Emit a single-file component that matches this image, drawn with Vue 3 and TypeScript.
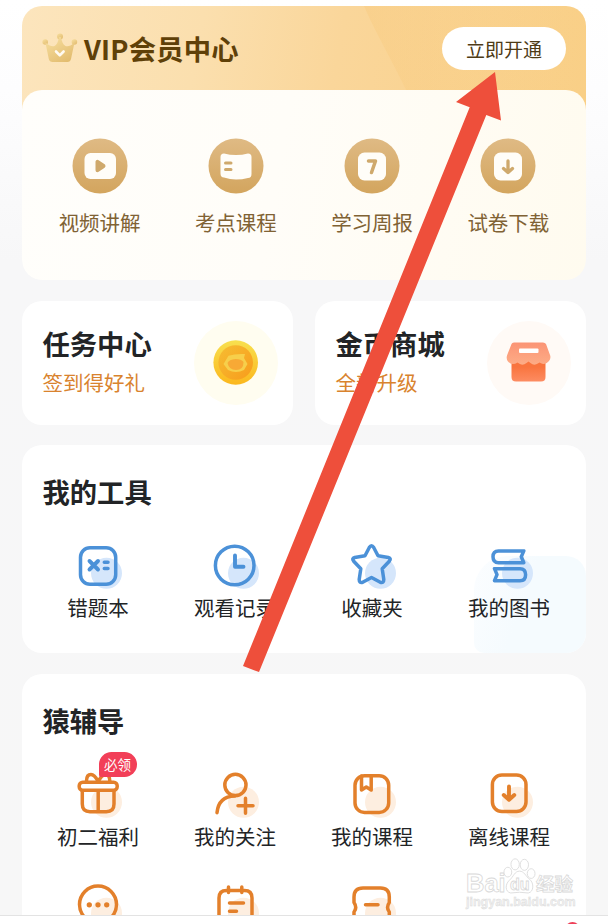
<script setup lang="ts">
interface Entry {
  id: string
  label: string
  badge?: string
}

const vipItems: Entry[] = [
  { id: 'video', label: '视频讲解' },
  { id: 'lesson', label: '考点课程' },
  { id: 'weekly', label: '学习周报' },
  { id: 'paper', label: '试卷下载' },
]

const tools: Entry[] = [
  { id: 'mistakes', label: '错题本' },
  { id: 'history', label: '观看记录' },
  { id: 'favorites', label: '收藏夹' },
  { id: 'books', label: '我的图书' },
]

const tutoring: Entry[] = [
  { id: 'gift', label: '初二福利', badge: '必领' },
  { id: 'follow', label: '我的关注' },
  { id: 'course', label: '我的课程' },
  { id: 'offline', label: '离线课程' },
  { id: 'chat', label: '' },
  { id: 'notes', label: '' },
  { id: 'coupon', label: '' },
]
</script>

<template>
  <div class="page">
    <main class="content">
      <section class="vip">
        <svg class="vip-shine" viewBox="0 0 564 110" aria-hidden="true">
          <defs>
            <linearGradient id="shine" x1="0" x2="1" y1="0" y2="0">
              <stop offset="0" stop-color="#f8c97c" stop-opacity="0.4" />
              <stop offset="1" stop-color="#f8cd83" stop-opacity="0" />
            </linearGradient>
          </defs>
          <path d="M342 0C352 24 368 50 388 92V110H564V0Z" fill="url(#shine)" />
        </svg>
        <header class="vip-head">
          <svg class="crown" viewBox="0 0 36 30" aria-hidden="true">
            <defs>
              <linearGradient id="crown" x1="0" x2="0.7" y1="0" y2="1">
                <stop offset="0" stop-color="#f8e0a2" />
                <stop offset="1" stop-color="#e3bd70" />
              </linearGradient>
            </defs>
            <g fill="url(#crown)">
              <circle cx="3.2" cy="9" r="2.8" />
              <circle cx="18" cy="3.4" r="3" />
              <circle cx="32.4" cy="9" r="2.8" />
              <path d="M3.4 9.5Q9.5 14.5 12.5 13Q16 11 17 4H19Q20 11 23.500 13Q27 14.500 32.500 9.500L29 26Q28.300 29 25.500 29H10.500Q7.500 29 6.800 26Z" />
            </g>
            <path d="M14 18.500L17.800 22.300L21.600 18.500" fill="none" stroke="#fffaf0" stroke-width="2.600" stroke-linecap="round" stroke-linejoin="round" />
          </svg>
          <h1>VIP会员中心</h1>
          <button type="button">立即开通</button>
        </header>
        <div class="vip-body">
          <div v-for="item in vipItems" :key="item.id" class="vip-item">
            <svg viewBox="0 0 56 56" aria-hidden="true">
              <defs>
                <linearGradient :id="'gold-' + item.id" x1="0" x2="0" y1="0" y2="1">
                  <stop offset="0" stop-color="#dfba84" />
                  <stop offset="1" stop-color="#d3a55e" />
                </linearGradient>
              </defs>
              <circle cx="28" cy="28" r="27.500" :fill="`url(#gold-${item.id})`" />
              <g v-if="item.id === 'video'">
                <rect x="12.500" y="15" width="31.500" height="26" rx="6" fill="#fffdf8" />
                <path d="M25.500 23.800V32.200L31.500 28Z" fill="#cfa96c" stroke="#cfa96c" stroke-width="4" stroke-linejoin="round" />
              </g>
              <g v-else-if="item.id === 'lesson'">
                <path d="M16 15.500Q22 17 28 17T40 15.500Q43.500 15.500 43.500 19V36Q43.500 40 40 40Q34 41.500 28 41.500T16 39.500Q12.500 39.500 12.500 35.500V19Q12.500 15.500 16 15.500Z" fill="#fffdf8" />
                <path d="M17.500 25H23M17.500 31.500H23" stroke="#cfa96c" stroke-width="3" stroke-linecap="round" />
              </g>
              <g v-else-if="item.id === 'weekly'">
                <rect x="14" y="14.500" width="28" height="28" rx="6.500" fill="#fffdf8" />
                <path d="M24.500 23H31.500L27.500 34.500" fill="none" stroke="#cfa96c" stroke-width="3.500" stroke-linecap="round" stroke-linejoin="round" />
              </g>
              <g v-else>
                <rect x="14" y="14.500" width="28" height="28" rx="6.500" fill="#fffdf8" />
                <path d="M28 23V34M23.500 30.500L28 34.500L32.500 30.500" fill="none" stroke="#cfa96c" stroke-width="3.300" stroke-linecap="round" stroke-linejoin="round" />
              </g>
            </svg>
            <span>{{ item.label }}</span>
          </div>
        </div>
      </section>

      <div class="promos">
        <section class="promo">
          <div>
            <h2>任务中心</h2>
            <p>签到得好礼</p>
          </div>
          <svg viewBox="0 0 84 84" aria-hidden="true">
            <defs>
              <linearGradient id="coin" x1="0" x2="0" y1="0" y2="1">
                <stop offset="0" stop-color="#f8e04f" />
                <stop offset="1" stop-color="#fbb71d" />
              </linearGradient>
              <linearGradient id="coin-face" x1="0" x2="1" y1="0" y2="1">
                <stop offset="0" stop-color="#f6bd32" />
                <stop offset="1" stop-color="#f89c1c" />
              </linearGradient>
            </defs>
            <circle cx="42" cy="42" r="42" fill="#fffdf0" />
            <circle cx="41.700" cy="41.500" r="22.300" fill="url(#coin)" />
            <circle cx="41.700" cy="41.500" r="17.300" fill="url(#coin-face)" />
            <path d="M29.500 43L34.500 34.800Q41 32.500 51 33L50 37L53.500 43L50 49Q42 53 34 49Z" fill="#f7cf4b" />
            <path d="M33.500 42Q35 38.500 41.500 38Q47.500 38 49.500 41Q49.500 49 42 49Q35 49 33.500 42Z" fill="#f8a935" />
          </svg>
        </section>
        <section class="promo">
          <div>
            <h2>金币商城</h2>
            <p>全新升级</p>
          </div>
          <svg viewBox="0 0 84 84" aria-hidden="true">
            <defs>
              <linearGradient id="roof" x1="0" x2="0" y1="0" y2="1">
                <stop offset="0" stop-color="#fb9475" />
                <stop offset="1" stop-color="#fdac86" />
              </linearGradient>
              <linearGradient id="store" x1="0" x2="0" y1="0" y2="1">
                <stop offset="0.400" stop-color="#f9743e" />
                <stop offset="1" stop-color="#fd8c62" />
              </linearGradient>
            </defs>
            <circle cx="42" cy="42" r="42" fill="#fffaf6" />
            <path d="M24.500 36H58.500V56Q58.500 60.500 54 60.500H29Q24.500 60.500 24.500 56Z" fill="url(#store)" />
            <path d="M27 21.500H56Q58 21.500 59 23L63.200 34.500Q64 37.500 62 40Q58.500 44.500 53.500 42L52.500 41.500Q47.500 45.500 43.500 42L41.500 40.500L39.500 42Q35 45.500 30.500 41.500Q25 45 21 40.500Q19 38 20 34.500L24.500 23Q25 21.500 27 21.500Z" fill="url(#roof)" />
            <rect x="32" y="27.500" width="19.500" height="4.500" rx="1" fill="#fff" />
          </svg>
        </section>
      </div>

      <section class="card tools">
        <h2>我的工具</h2>
        <div class="grid">
          <div v-for="item in tools" :key="item.id" class="cell">
            <svg class="icon blue" viewBox="0 0 60 60" aria-hidden="true">
              <circle class="tint" cx="38.500" cy="38.300" r="15.500" />
              <g v-if="item.id === 'mistakes'">
                <rect x="12.500" y="12.700" width="35.200" height="36.600" rx="9.500" />
                <path class="bold" d="M21.500 26L30 34.500M30 26L21.500 34.500" />
                <path d="M36.300 27.300H40M36.300 33.600H40" />
              </g>
              <g v-else-if="item.id === 'history'">
                <circle cx="29.700" cy="30.500" r="19.300" />
                <path class="bold" d="M30 20.500V31.700H38.500" />
              </g>
              <path v-else-if="item.id === 'favorites'" d="M27.300 12.500Q29.500 8.800 31.700 12.500L36 20.800L46.300 22.500Q49.500 23.500 47.500 26L40.200 33.800L41.800 44.500Q41.800 48.500 38.300 47.300L29.500 42.500L20.700 47.300Q17.200 48.500 17.200 44.500L18.800 33.800L11.500 26Q9.500 23.500 12.700 22.500L23 20.800Z" />
              <g v-else>
                <path d="M44.800 15.900H19.500Q14 15.900 14 21.800T19.500 27.700H44.800L42.300 21.800Z" />
                <path d="M15.500 33.700H41Q46.600 33.700 46.600 39.700T41 45.700H15.500L18 39.700Z" />
              </g>
            </svg>
            <span>{{ item.label }}</span>
          </div>
        </div>
      </section>

      <section class="card tutor">
        <h2>猿辅导</h2>
        <div class="grid">
          <div v-for="item in tutoring" :key="item.id" class="cell">
            <svg class="icon orange" viewBox="0 0 60 60" aria-hidden="true">
              <circle class="tint" cx="38.500" cy="38.300" r="15.500" />
              <g v-if="item.id === 'gift'">
                <path d="M14.300 27V40Q14.300 47.700 22 47.700H38.300Q46 47.700 46 40V27M30.200 27V47.500" />
                <rect x="11.200" y="18.300" width="38" height="8" rx="3.500" fill="#fff" />
                <path d="M18.500 17Q18.500 10.500 23 10.500Q26.500 10.500 30.200 17.500Q34 10.500 37.500 10.500Q41.800 10.500 41.800 17" />
              </g>
              <g v-else-if="item.id === 'follow'">
                <circle cx="30.400" cy="20.900" r="10.600" />
                <path d="M30 32Q13.500 32.500 12 48.700M33 41.700H48M40.500 34.200V49.200" />
              </g>
              <g v-else-if="item.id === 'course'">
                <rect x="13" y="11.700" width="33.700" height="36.700" rx="9.500" />
                <path d="M19.500 12V26L24.300 23L29.200 26V12" />
              </g>
              <g v-else-if="item.id === 'offline'">
                <rect x="13.400" y="11" width="33.600" height="36.500" rx="9.500" />
                <path class="bold" d="M30 22.500V35.500M24.700 31L30 35.800L35.300 31" />
              </g>
              <g v-else-if="item.id === 'chat'">
                <circle cx="30" cy="29.500" r="18.500" />
                <path class="dots" d="M21.300 29.800H21.310M30 29.800H30.010M38.700 29.800H38.710" />
              </g>
              <g v-else-if="item.id === 'notes'">
                <path d="M14 50V23Q14 15.500 21.500 15.500H39.500Q47 15.500 47 23V50M23.500 12V17.500M36.800 12V17.500M24.500 28H38.500M24.500 36.300H31.500" />
              </g>
              <g v-else>
                <path d="M12 50V37Q15.500 32.500 12 27.500V22Q12 13 21 13H38.500Q47.300 13 47.300 22V27.500Q43.800 32.500 47.300 37V50M23.500 29.700H36" />
              </g>
            </svg>
            <span v-if="item.label">{{ item.label }}</span>
            <em v-if="item.badge" class="badge">{{ item.badge }}</em>
          </div>
        </div>
      </section>
    </main>

    <footer class="tabbar"></footer>

    <div class="watermark">
      <div class="wm-top">
        <span class="wm-name">Bai</span>
        <span class="paw">
          <svg viewBox="0 0 34 38" aria-hidden="true">
            <g fill="#fff" stroke="#dedede" stroke-width="1">
              <ellipse cx="5" cy="15" rx="4" ry="5" />
              <ellipse cx="12.500" cy="7" rx="4.300" ry="5.700" />
              <ellipse cx="22" cy="7.500" rx="4.300" ry="5.700" />
              <ellipse cx="29" cy="16.500" rx="4" ry="5" />
              <path d="M17 14C22 14 23 19 27.500 22.500S32 35.500 26 36.500Q17 35 8 36.500C2 35.500 2 27.500 6.500 23.500S12 14 17 14Z" />
            </g>
          </svg>
          <i>du</i>
        </span>
        <span class="wm-cn">经验</span>
      </div>
      <div class="wm-url">jingyan.baidu.com</div>
    </div>

    <svg class="pointer" viewBox="0 0 608 924" aria-hidden="true">
      <path d="M495 72L501 120.500L486.300 115L259 672L243 666L469.700 107.300L456 102Z" fill="#ee4f3b" />
    </svg>
  </div>
</template>

<style>
body {
  margin: 0;
}
</style>

<style scoped>
.page {
  position: relative;
  width: 608px;
  height: 924px;
  overflow: hidden;
  display: flex;
  flex-direction: column;
  background: linear-gradient(#ffffff 0, #fdfdfe 90px, #f7f7f8 260px, #f7f7f7 100%);
  font-family: "Noto Sans CJK SC", sans-serif;
  color: #222426;
}

.content {
  flex: 1;
  min-height: 0;
  overflow: hidden;
  box-sizing: border-box;
  padding: 6px 22px 0;
}

h1,
h2,
p {
  margin: 0;
}

h2 {
  font-size: 27.3px;
  line-height: 36px;
  font-weight: 700;
}

.vip {
  position: relative;
  height: 274px;
  border-radius: 20px;
  overflow: hidden;
  background: linear-gradient(100deg, #fce5bd 0, #fbdfae 180px, #fad69a 320px, #f9cf86 100%) top / 100% 106px no-repeat;
}

.vip-shine {
  position: absolute;
  top: 0;
  left: 0;
  width: 564px;
  height: 110px;
}

.vip-head {
  position: relative;
  height: 84px;
  box-sizing: border-box;
  padding: 0 20px;
  display: flex;
  align-items: center;
}

.crown {
  width: 36px;
  height: 30px;
}

h1 {
  flex: 1;
  padding-left: 6px;
  font-size: 27.3px;
  letter-spacing: 0.2px;
  line-height: 40px;
  font-weight: 700;
  color: #5f4008;
}

button {
  width: 124px;
  height: 43px;
  padding: 0;
  border: 0;
  border-radius: 22px;
  background: #fff;
  font-family: inherit;
  font-size: 19px;
  line-height: 41px;
  color: #4e3b16;
}

.vip-body {
  position: relative;
  height: 190px;
  box-sizing: border-box;
  padding: 48px 9.5px 0;
  border-radius: 20px;
  background: linear-gradient(100deg, #fffefb 0, #fffdf8 45%, #fffbef 100%);
  display: grid;
  grid-template-columns: repeat(4, 1fr);
}

.vip-item {
  display: flex;
  flex-direction: column;
  align-items: center;
  gap: 12.5px;
}

.vip-item svg {
  width: 56px;
  height: 56px;
}

.vip-item span {
  font-size: 20.5px;
  line-height: 30px;
  color: #806234;
}

.promos {
  display: grid;
  grid-template-columns: 1fr 1fr;
  gap: 22px;
  margin-top: 21px;
}

.promo {
  height: 123.5px;
  box-sizing: border-box;
  padding: 0 15px 0 20.5px;
  border-radius: 20px;
  background: #fff;
  display: flex;
  align-items: center;
  justify-content: space-between;
}

.promo div {
  padding-bottom: 3px;
}

.promo p {
  margin-top: 6px;
  font-size: 20.5px;
  line-height: 30px;
  color: #d9832e;
}

.promo svg {
  width: 84px;
  height: 84px;
}

.card {
  margin-top: 20.5px;
  padding: 28px 8.5px 0 7.5px;
  box-sizing: border-box;
  border-radius: 20px;
  background: #fff;
}

.card h2 {
  padding-left: 13px;
}

.tools {
  position: relative;
  height: 208px;
}

.tools::before {
  content: "";
  position: absolute;
  right: 0;
  bottom: 0;
  width: 112px;
  height: 97px;
  border-radius: 34px 20px 20px 10px;
  background: linear-gradient(110deg, #fbfdff, #f5fbfe 45%);
}

.tutor {
  height: 290px;
}

.grid {
  margin-top: 26px;
  display: grid;
  grid-template-columns: repeat(4, 1fr);
  grid-auto-rows: 111px;
}

.cell {
  position: relative;
  display: flex;
  flex-direction: column;
  align-items: center;
}

.cell span {
  margin-top: -2px;
  font-size: 20.5px;
  line-height: 28px;
}

.icon {
  width: 60px;
  height: 60px;
  fill: none;
  stroke-width: 3.5;
  stroke-linecap: round;
  stroke-linejoin: round;
}

.blue {
  stroke: #4b91d8;
}

.orange {
  stroke: #e3802b;
}

.icon .tint {
  stroke: none;
}

.blue .tint {
  fill: #d5e6fb;
}

.orange .tint {
  fill: #fdeee0;
}

.bold {
  stroke-width: 3.9;
}

.dots {
  stroke-width: 5.3;
}

.badge {
  position: absolute;
  top: -12px;
  left: 69px;
  width: 38px;
  height: 25px;
  border-radius: 13px 13px 13px 2px;
  background: #f23f58;
  color: #fff;
  font-size: 13.5px;
  line-height: 25px;
  font-style: normal;
  text-align: center;
}

.tabbar {
  position: relative;
  height: 9px;
  box-sizing: border-box;
  border-top: 1px solid #e3e3e3;
  background: #fff;
  overflow: hidden;
}

.tabbar::after {
  content: "";
  position: absolute;
  top: 6px;
  left: 565px;
  width: 15px;
  height: 15px;
  border-radius: 50%;
  background: #ee4058;
}

.watermark {
  position: absolute;
  left: 466px;
  top: 857px;
  color: #fff;
  -webkit-text-stroke: 0.8px #d9d9d9;
}

.wm-top {
  display: flex;
  align-items: flex-end;
  height: 38px;
}

.wm-name {
  width: 37px;
  font-family: "Liberation Sans", sans-serif;
  font-weight: 700;
  font-size: 25.5px;
  line-height: 24px;
}

.paw {
  position: relative;
  width: 33px;
  height: 38px;
}

.paw svg {
  width: 33px;
  height: 38px;
}

.paw i {
  position: absolute;
  left: 7px;
  bottom: 1px;
  font: 700 16px/18px "Liberation Sans", sans-serif;
}

.wm-cn {
  font-size: 18.5px;
  font-weight: 700;
  line-height: 24px;
}

.wm-url {
  font: 700 12.5px/15px "Liberation Sans", sans-serif;
  color: #f0f0f0;
  -webkit-text-stroke-width: 0.4px;
}

.pointer {
  position: absolute;
  inset: 0;
  width: 608px;
  height: 924px;
  pointer-events: none;
}
</style>
